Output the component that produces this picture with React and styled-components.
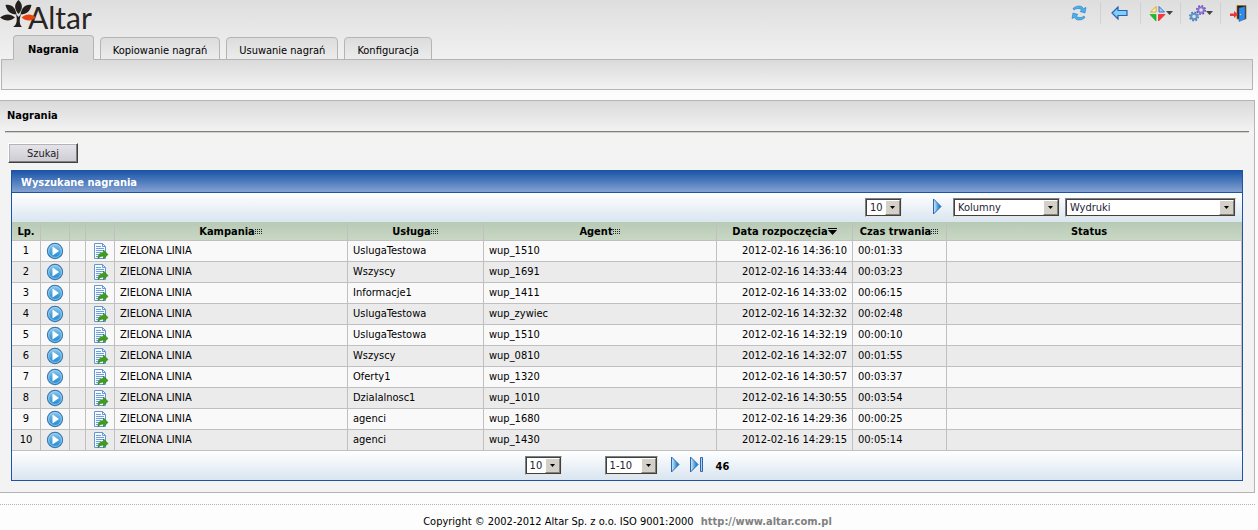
import React from "react";
import styled, { createGlobalStyle } from "styled-components";

const GlobalStyle = createGlobalStyle`
  * { box-sizing: border-box; }
  body {
    margin: 0;
    background: #fdfdfd linear-gradient(#dedede, #fdfdfd) 0 0 / 100% 96px no-repeat;
    color: #000;
    font: 11px/14px "DejaVu Sans Condensed", Tahoma, "DejaVu Sans", sans-serif;
  }
`;

const Page = styled.div`
  min-width: 1000px;
  padding-right: 3px;
`;

const TopBar = styled.header`
  display: flex;
  justify-content: space-between;
  height: 35px;
`;

const Tools = styled.div`
  display: flex;
  align-items: flex-start;
  padding-top: 2px;
`;

const Tool = styled.button`
  display: flex;
  justify-content: center;
  align-items: center;
  width: ${(p) => p.$width || 40}px;
  height: 22px;
  padding: 0 ${(p) => (p.$menu ? 0 : 3)}px 0 0;
  border: 0;
  border-right: ${(p) => (p.$last ? 0 : 1)}px solid #cdd1d8;
  background: none;
`;

const TabList = styled.nav`
  display: flex;
  align-items: flex-end;
  gap: 6px;
  height: 25px;
  padding-left: 13px;
  margin-bottom: -1px;
`;

const Tab = styled.a`
  display: flex;
  align-items: center;
  height: ${(p) => (p.$active ? 25 : 23)}px;
  padding: 4px ${(p) => (p.$active ? 14 : 12)}px 0;
  border: 1px solid #b4b4b4;
  border-bottom-color: ${(p) => (p.$active ? "#dadada" : "#b4b4b4")};
  border-radius: 4px 4px 0 0;
  background: ${(p) => (p.$active ? "#dadada" : "linear-gradient(#dcdcdc, #ececec)")};
  color: #000;
  font-weight: ${(p) => (p.$active ? "bold" : "normal")};
  text-decoration: none;
`;

const SubMenu = styled.div`
  height: 31px;
  margin: 0 2px 0 1px;
  border: 1px solid #b4b4b4;
  background: linear-gradient(#dadada, #f3f3f3);
`;

const Panel = styled.main`
  margin-top: 10px;
  padding: 0 5px 11px;
  border: 1px solid #b4b4b4;
  border-left: 0;
  background: #f3f3f3 linear-gradient(#dadada, #f3f3f3) 0 0 / 100% 31px no-repeat;
`;

const PanelTitle = styled.h1`
  margin: 0 0 11px;
  padding: 8px 2px;
  border-bottom: 1px solid #808080;
  box-shadow: 0 1px #d4d0c8;
  font-size: 11px;
  line-height: 14px;
`;

const SearchButton = styled.button`
  display: block;
  width: 70px;
  height: 20px;
  margin: 0 3px 7px;
  padding: 1px 0 0;
  border: 1px solid;
  border-color: #fff #404040 #404040 #fff;
  box-shadow: inset -1px -1px #808080, inset 1px 1px #b4b4b8;
  background: linear-gradient(#e6e5ea, #cdccd4);
  color: #222;
  font: inherit;
`;

const Grid = styled.section`
  margin: 0 6px;
  border: 1px solid #1c55a8;
`;

const GridTitle = styled.h2`
  margin: 0;
  padding: 5px 9px 2px;
  height: 22px;
  border-bottom: 1px solid #1c55a8;
  background: linear-gradient(#1c55a8, #83a2d1);
  color: #fff;
  font-size: 11px;
  line-height: 14px;
`;

const Bar = styled.div`
  display: flex;
  justify-content: ${(p) => (p.$center ? "center" : "flex-end")};
  align-items: flex-start;
  height: 29px;
  padding: 5px ${(p) => (p.$center ? 0 : 6)}px 0 0;
  background: linear-gradient(#fff, #d9e5f0);
`;

const SelectFrame = styled.span`
  display: grid;
  width: ${(p) => p.$width}px;
  height: 19px;
  border: 1px solid;
  border-color: #808080 #e8e6e0 #e8e6e0 #808080;
`;

const SelectInput = styled.select`
  grid-area: 1 / 1;
  appearance: none;
  min-width: 0;
  padding: 1px 16px 0 3px;
  border: 1px solid #404040;
  border-radius: 0;
  background: #fff;
  color: #223;
  font: inherit;
`;

const DropButton = styled.span`
  grid-area: 1 / 1;
  place-self: center end;
  display: grid;
  place-items: center;
  width: 15px;
  height: 15px;
  margin-right: 1px;
  border: 1px solid;
  border-color: #fff #808080 #808080 #fff;
  background: #d4d0c8;
  pointer-events: none;
`;

const PagerButton = styled.button`
  display: block;
  height: 17px;
  margin: 0 ${(p) => p.$after}px 0 ${(p) => p.$before}px;
  padding: 0;
  border: 0;
  background: none;
`;

const Gap = styled.span`
  width: ${(p) => p.$width}px;
`;

const Total = styled.strong`
  line-height: 22px;
`;

const Table = styled.table`
  width: 100%;
  table-layout: fixed;
  border-collapse: separate;
  border-spacing: 0;
`;

const HeadCell = styled.th`
  width: ${(p) => (p.$width ? `${p.$width}px` : "auto")};
  height: 19px;
  padding: 2px ${(p) => (p.$width ? 0 : 10)}px 0 0;
  border: solid #c0c0c0;
  border-width: 0 1px 1px 0;
  background: linear-gradient(#b7cab4, #c9d7c5);
  line-height: 16px;
  white-space: nowrap;
`;

const Row = styled.tr`
  background: #f9f9f9;
  &:nth-child(even) { background: #ebebeb; }
`;

const Cell = styled.td`
  height: 21px;
  padding: 0 5px;
  border: solid #c0c0c0;
  border-width: 0 1px 1px 0;
  line-height: 14px;
  text-align: ${(p) => p.$align || "left"};
  white-space: nowrap;
`;

const IconCell = styled(Cell)`
  padding: 0;
`;

const IconButton = styled.button`
  display: block;
  width: 18px;
  height: 18px;
  margin: 0 auto;
  padding: 0;
  border: 0;
  background: none;
`;

const Footer = styled.footer`
  margin-top: 11px;
  padding: 10px 0 8px;
  border-top: 1px dotted #b4b4b4;
  text-align: center;
`;

const SiteLink = styled.a`
  margin-left: 4px;
  color: #808080;
  font-weight: bold;
  text-decoration: none;
`;

const Brand = styled.div`
  display: flex;
  align-items: flex-start;
`;

const BrandName = styled.span`
  margin-left: -8px;
  color: #2a2522;
  font: 30px/34px Lato, sans-serif;
`;

const Leaf = styled.svg`
  position: relative;
  z-index: 1;
`;

function Logo() {
  return (
    <Brand>
      <Leaf width="36" height="28" viewBox="0 0 36 28" aria-hidden="true">
        <g fill="#231f1c">
          <path d="M18.500 0C23 4 23 9 18.500 14C14 9 14 4 18.500 0Z" />
          <path d="M5.500 5C12 4 15.500 8 16.500 14.500C10 14.500 7 11 5.500 5Z" />
          <path d="M31.500 5C25 4 21.500 8 20.500 14.500C27 14.500 30 11 31.500 5Z" />
          <path d="M0 17.500C5 13.500 10.500 13.500 15 17.500C10.500 21.500 5 21.500 0 17.500Z" />
          <path d="M16 14L18.500 17L21 14C19 20 19.500 25 22 27H13C17 25 17.500 20 16 14Z" />
        </g>
        <path d="M21.500 17.500C26 13.500 31.500 13.500 36 17.500C31.500 21.500 26 21.500 21.500 17.500Z" fill="#e8420e" />
      </Leaf>
      <BrandName>Altar</BrandName>
    </Brand>
  );
}

const Caret = () => (
  <svg width="7" height="4" viewBox="0 0 7 4"><path d="M0 0H7L3.500 4Z" fill="#444" /></svg>
);

const RefreshIcon = () => (
  <svg width="16" height="16" viewBox="0 0 16 16" fill="#45b4ee" stroke="#2c78bd" strokeWidth=".6">
    <path d="M2 3.500Q5 .5 9 1Q11.500 1.500 12.500 3.500L15 2.500L14 8L9 6.500L11 5Q9 3 6 3.500Q4 4 3 5Z" />
    <path d="M14 12.500Q11 15.500 7 15Q4.500 14.500 3.500 12.500L1 13.500L2 8L7 9.500L5 11Q7 13 10 12.500Q12 12 13 11Z" />
  </svg>
);

const BackIcon = () => (
  <svg width="17" height="14" viewBox="0 0 17 14">
    <path d="M1 7L7 1V4.500H16V9.500H7V13Z" fill="#7fd0f4" stroke="#2f5fb3" strokeWidth="1.200" />
  </svg>
);

const ColorsIcon = () => (
  <svg width="17" height="17" viewBox="0 0 17 17">
    <path d="M1.500 7H7V1.500Z" fill="#fff3c0" stroke="#dca81e" />
    <path d="M10 1.500V7H15.500Z" fill="#a8ccf8" stroke="#3b6fc4" />
    <path d="M1 9.500H7V16Z" fill="#16c22c" stroke="#159a24" strokeWidth=".6" />
    <path d="M9.500 9.500H16L9.500 16Z" fill="#f33" stroke="#d11" strokeWidth=".6" />
  </svg>
);

const GearsIcon = () => (
  <svg width="17" height="17" viewBox="0 0 17 17" fill="none">
    <circle cx="5" cy="11.500" r="2.800" stroke="#5b93cd" strokeWidth="2" />
    <circle cx="5" cy="11.500" r="4.300" stroke="#3f78b8" strokeWidth="1.400" strokeDasharray="1.700 1.677" />
    <circle cx="12" cy="5" r="2.800" stroke="#8a72d8" strokeWidth="2" />
    <circle cx="12" cy="5" r="4.300" stroke="#5b45b0" strokeWidth="1.400" strokeDasharray="1.700 1.677" />
  </svg>
);

const ExitIcon = () => (
  <svg width="17" height="17" viewBox="0 0 17 17">
    <path d="M7 .5H16V14H7Z" fill="#2a1a0c" stroke="#a8700f" strokeWidth=".8" />
    <path d="M9 3L15 1.500V14L9 16.500Z" fill="#2b8cf0" stroke="#1b5fc8" strokeWidth=".6" />
    <path d="M0 8.500H4V6L8 9.500L4 13V11H0Z" fill="#e8383c" />
    <circle cx="10.500" cy="9.500" r=".7" fill="#f4d860" />
  </svg>
);

const NextIcon = ({ last }) => (
  <svg width={last ? 13 : 9} height="17" viewBox={last ? "0 0 13 17" : "0 0 9 17"} display="block">
    <defs>
      <linearGradient id="arrowFill">
        <stop offset="0" stopColor="#d5effb" />
        <stop offset="0.800" stopColor="#1583cf" />
      </linearGradient>
    </defs>
    <path d="M.5 1L8 8.500L.5 16Z" fill="url(#arrowFill)" stroke="#3461b0" />
    {last && <path d="M10.500 1.500H12.500V15.500H10.500Z" fill="#9edaf5" stroke="#3461b0" />}
  </svg>
);

const PlayIcon = () => (
  <svg width="18" height="18" viewBox="0 0 18 18" display="block">
    <defs>
      <linearGradient id="playFill" x2="0" y2="1">
        <stop offset="0" stopColor="#8cc8ee" />
        <stop offset="1" stopColor="#1585d2" />
      </linearGradient>
    </defs>
    <circle cx="9" cy="9" r="7.600" fill="url(#playFill)" stroke="#3d78ae" strokeWidth="1.100" />
    <circle cx="9" cy="9" r="6.400" fill="none" stroke="#b5dcf4" strokeWidth=".7" />
    <path d="M6.500 4.500L13 9L6.500 13.500Z" fill="#fff" />
  </svg>
);

const ExportIcon = () => (
  <svg width="18" height="18" viewBox="0 0 18 18" display="block">
    <path d="M3.500 1.500H11.500L14.500 4.500V16.500H3.500Z" fill="#f4faff" stroke="#6596d2" />
    <path d="M11.500 1.500V4.500H14.500" fill="none" stroke="#6596d2" />
    <path d="M5 4.500H10M5 6.500H13M5 8.500H13M5 10.500H10M5 12.500H8M5 14.500H7" stroke="#6f9fd8" />
    <path d="M7 16.500Q7 10.500 12.500 10.500V8L17 12.500L12.500 16.500V14Q9.500 13.500 7 16.500Z" fill="#3f9f1c" stroke="#23750e" strokeWidth=".6" />
  </svg>
);

const HeadIcon = styled.svg`
  vertical-align: ${(p) => p.$lift}px;
`;

const GripIcon = () => (
  <HeadIcon $lift={1} width="8" height="5" viewBox="0 0 8 5" shapeRendering="crispEdges">
    <path d="M0 .5H8M0 2.500H8M0 4.500H8" stroke="#222" strokeDasharray="1 1" />
  </HeadIcon>
);

const SortIcon = () => (
  <HeadIcon $lift={0} width="9" height="7" viewBox="0 0 9 7">
    <path d="M0 .5H9" stroke="#000" />
    <path d="M0 2H9L4.500 7Z" />
  </HeadIcon>
);

const Select = ({ label, text, width }) => (
  <SelectFrame $width={width}>
    <SelectInput aria-label={label}>
      <option>{text}</option>
    </SelectInput>
    <DropButton>
      <svg width="5" height="3" viewBox="0 0 5 3"><path d="M0 0H5L2.500 3Z" /></svg>
    </DropButton>
  </SelectFrame>
);

const tabs = ["Nagrania", "Kopiowanie nagrań", "Usuwanie nagrań", "Konfiguracja"];

const columns = [
  { label: "Lp.", width: 29 },
  { label: "", width: 29 },
  { label: "", width: 16 },
  { label: "", width: 29 },
  { label: "Kampania", width: 233, icon: <GripIcon /> },
  { label: "Usługa", width: 136, icon: <GripIcon /> },
  { label: "Agent", width: 233, icon: <GripIcon /> },
  { label: "Data rozpoczęcia", width: 136, icon: <SortIcon /> },
  { label: "Czas trwania", width: 94, icon: <GripIcon /> },
  { label: "Status" },
];

const recordings = [
  ["UslugaTestowa", "wup_1510", "14:36:10", "00:01:33"],
  ["Wszyscy", "wup_1691", "14:33:44", "00:03:23"],
  ["Informacje1", "wup_1411", "14:33:02", "00:06:15"],
  ["UslugaTestowa", "wup_zywiec", "14:32:32", "00:02:48"],
  ["UslugaTestowa", "wup_1510", "14:32:19", "00:00:10"],
  ["Wszyscy", "wup_0810", "14:32:07", "00:01:55"],
  ["Oferty1", "wup_1320", "14:30:57", "00:03:37"],
  ["Dzialalnosc1", "wup_1010", "14:30:55", "00:03:54"],
  ["agenci", "wup_1680", "14:29:36", "00:00:25"],
  ["agenci", "wup_1430", "14:29:15", "00:05:14"],
];

export default function App() {
  return (
    <>
      <GlobalStyle />
      <Page>
        <TopBar>
          <Logo />
          <Tools>
            <Tool aria-label="Odśwież"><RefreshIcon /></Tool>
            <Tool aria-label="Wstecz"><BackIcon /></Tool>
            <Tool aria-label="Kolory" $menu><ColorsIcon /><Caret /></Tool>
            <Tool aria-label="Ustawienia" $menu><GearsIcon /><Caret /></Tool>
            <Tool aria-label="Wyloguj" $menu $width={34} $last><ExitIcon /></Tool>
          </Tools>
        </TopBar>
        <TabList>
          {tabs.map((name, i) => (
            <Tab key={name} href="#" $active={i === 0}>{name}</Tab>
          ))}
        </TabList>
        <SubMenu />
        <Panel>
          <PanelTitle>Nagrania</PanelTitle>
          <SearchButton>Szukaj</SearchButton>
          <Grid>
            <GridTitle>Wyszukane nagrania</GridTitle>
            <Bar>
              <Select label="Wierszy na stronie" text="10" width={37} />
              <PagerButton $before={31} $after={11} aria-label="Następna strona"><NextIcon /></PagerButton>
              <Select label="Kolumny" text="Kolumny" width={107} />
              <Gap $width={5} />
              <Select label="Wydruki" text="Wydruki" width={171} />
            </Bar>
            <Table>
              <thead>
                <tr>
                  {columns.map((c, i) => (
                    <HeadCell key={i} $width={c.width}>{c.label}{c.icon}</HeadCell>
                  ))}
                </tr>
              </thead>
              <tbody>
                {recordings.map(([service, agent, time, duration], i) => (
                  <Row key={i}>
                    <Cell $align="center">{i + 1}</Cell>
                    <IconCell><IconButton aria-label="Odtwórz"><PlayIcon /></IconButton></IconCell>
                    <IconCell />
                    <IconCell><IconButton aria-label="Eksportuj"><ExportIcon /></IconButton></IconCell>
                    <Cell>ZIELONA LINIA</Cell>
                    <Cell>{service}</Cell>
                    <Cell>{agent}</Cell>
                    <Cell $align="right">2012-02-16 {time}</Cell>
                    <Cell>{duration}</Cell>
                    <Cell />
                  </Row>
                ))}
              </tbody>
            </Table>
            <Bar $center>
              <Select label="Wierszy na stronie" text="10" width={37} />
              <Gap $width={43} />
              <Select label="Strona" text="1-10" width={53} />
              <PagerButton $before={13} $after={10} aria-label="Następna strona"><NextIcon /></PagerButton>
              <PagerButton $before={0} $after={13} aria-label="Ostatnia strona"><NextIcon last /></PagerButton>
              <Total>46</Total>
            </Bar>
          </Grid>
        </Panel>
        <Footer>
          Copyright © 2002-2012 Altar Sp. z o.o. ISO 9001:2000 <SiteLink href="#">http://www.altar.com.pl</SiteLink>
        </Footer>
      </Page>
    </>
  );
}
